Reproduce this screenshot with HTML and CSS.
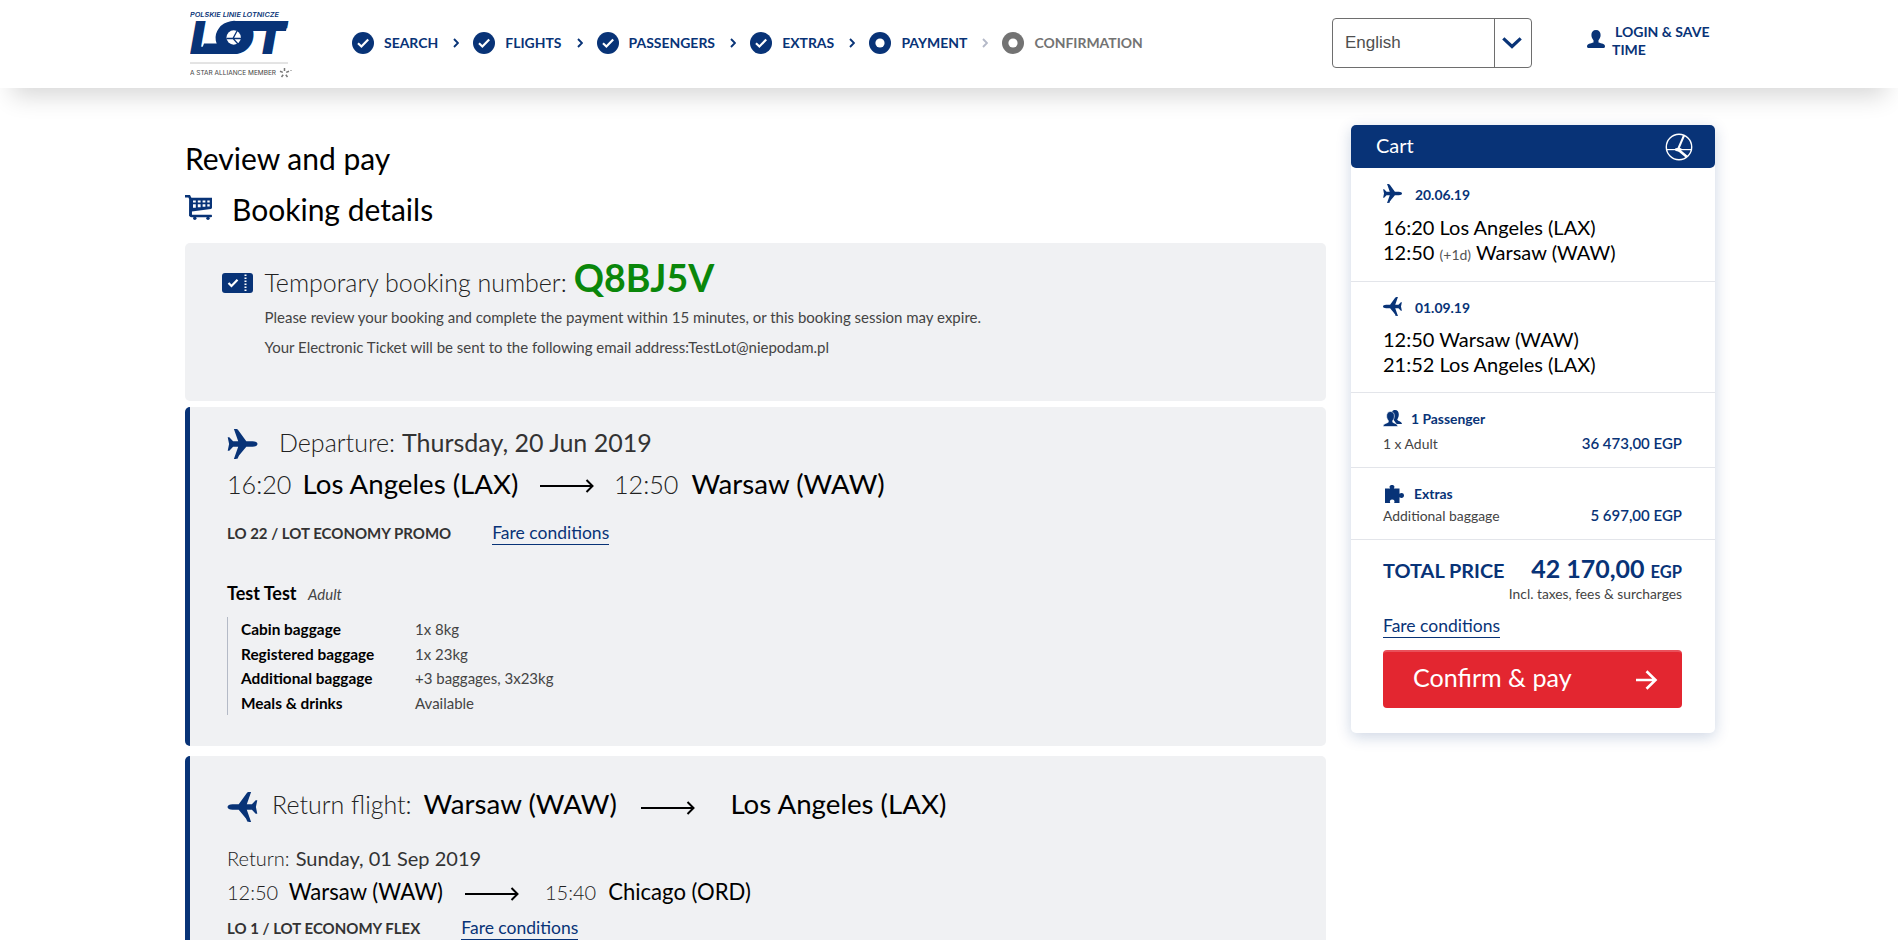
FILE: index.html
```html
<!DOCTYPE html>
<html lang="en">
<head>
<meta charset="utf-8">
<title>Review and pay</title>
<link rel="stylesheet" href="styles.css">
</head>
<body>
<svg class="defs" width="0" height="0">
  <symbol id="plane" viewBox="0 0 30 30">
    <path d="M8.600 0H6.400L10.700 12.200H5.600L1.800 8.200H.2L1.600 15L.2 21.800H1.800L5.600 17.800H10.700L6.400 30H8.600L18.800 17.800H25C28 17.800 30 16.400 30 15S28 12.200 25 12.200H18.800L10.800 1.200C10 .2 9.400 0 8.600 0Z"/>
    <path d="M10.400 29.200C10 29.800 9.400 30 8.600 30L12 24Z"/>
  </symbol>
  <symbol id="check" viewBox="0 0 22 22">
    <circle cx="11" cy="11" r="11"/>
    <path d="M6 11.300l3.400 3.200 6.800-7" fill="none" stroke="#fff" stroke-width="2.200"/>
  </symbol>
  <symbol id="dot" viewBox="0 0 22 22">
    <circle cx="11" cy="11" r="11"/>
    <circle cx="11" cy="11" r="4.600" fill="#fff"/>
  </symbol>
  <symbol id="chev" viewBox="0 0 6 10">
    <path d="M1 1l4 4-4 4" fill="none" stroke="currentColor" stroke-width="1.900"/>
  </symbol>
  <symbol id="arrow" viewBox="0 0 54 14">
    <path d="M0 7h52.500M46.500 1l6 6-6 6" fill="none" stroke="#000" stroke-width="2"/>
  </symbol>
</svg>

<header class="topbar">
  <svg class="logo" width="104" height="70" viewBox="0 0 104 70">
    <text class="logo-small" x="0" y="8.800" textLength="89" lengthAdjust="spacingAndGlyphs">POLSKIE LINIE LOTNICZE</text>
    <text class="logo-main" x="0" y="46" textLength="96" lengthAdjust="spacingAndGlyphs">LOT</text>
    <path d="M43 13H98L96 23H36zM14 35.500H42L46 46H10z" fill="#083377"/>
    <ellipse cx="43.500" cy="29.500" rx="18" ry="16.500" fill="#083377" transform="rotate(-10 43 29.500)"/>
    <circle cx="43.700" cy="29.500" r="7.200" fill="#fff"/>
    <path d="M36.500 30.500H51M47 23L43 30.500L48 36" fill="none" stroke="#083377" stroke-width="1.300"/>
    <path d="M0 55h98" stroke="#c8c8c8"/>
    <text class="logo-member" x="0" y="66.500" textLength="86" lengthAdjust="spacingAndGlyphs">A STAR ALLIANCE MEMBER</text>
    <path d="M94.500 60v3M99 63.200l-2.800 1.200M97.500 69l-1.700-2.300M91.500 69l1.700-2.300M90 63.200l2.800 1.200" stroke="#777" stroke-width="1.500" fill="none"/>
    <path d="M100 62.500h2" stroke="#bbb"/>
  </svg>
  <ol class="steps">
    <li><svg class="step-icon"><use href="#check"/></svg><span>SEARCH</span><svg class="chev"><use href="#chev"/></svg></li>
    <li><svg class="step-icon"><use href="#check"/></svg><span>FLIGHTS</span><svg class="chev"><use href="#chev"/></svg></li>
    <li><svg class="step-icon"><use href="#check"/></svg><span>PASSENGERS</span><svg class="chev"><use href="#chev"/></svg></li>
    <li><svg class="step-icon"><use href="#check"/></svg><span>EXTRAS</span><svg class="chev"><use href="#chev"/></svg></li>
    <li><svg class="step-icon"><use href="#dot"/></svg><span>PAYMENT</span><svg class="chev chev-off"><use href="#chev"/></svg></li>
    <li class="off"><svg class="step-icon"><use href="#dot"/></svg><span>CONFIRMATION</span></li>
  </ol>
  <div class="language">
    <span class="language-name">English</span>
    <span class="language-toggle"><svg width="20" height="12" viewBox="0 0 20 12"><path d="M1.300 1.300L10 9.500L18.700 1.300" fill="none" stroke="#083377" stroke-width="3.200"/></svg></span>
  </div>
  <a class="login">
    <svg width="18" height="18" viewBox="0 0 18 18"><path d="M9 0C12 0 13.600 2 13.600 5C13.600 7.500 12.500 9 11.500 10.200V12.600C14.500 13.600 18 13.800 18 16.400C18 17.600 17 18 16 18H2C1 18 0 17.600 0 16.400C0 13.800 3.500 13.600 6.500 12.600V10.200C5.500 9 4.400 7.500 4.400 5C4.400 2 6 0 9 0Z"/></svg>
    <span class="login-text">LOGIN &amp; SAVE TIME</span>
  </a>
</header>

<div class="page">
  <main class="main">
    <h1 class="title">Review and pay</h1>
    <h2 class="subtitle">
      <svg class="cart-icon" width="27" height="25" viewBox="0 0 27 25">
        <path d="M0 1.300H4.200L5.500 4V21" fill="none" stroke="#083377" stroke-width="2.600"/>
        <path d="M4.500 2.800H27V12.300C27 13.300 26.500 13.800 25.800 13.900L6.800 16.600V19.800H26C26.700 19.800 27 20.200 27 21S26.700 22.200 26 22.200H6.500C5 22.200 4.200 21.400 4.200 20Z"/>
        <path d="M8 5.400h2.800v2H8zM12.800 5.400h2.800v2h-2.800zM17.600 5.400h2.800v2h-2.800zM22.300 5.400h2.400v2h-2.400zM8 9.200h2.800v3.600H8zM12.800 9.200h2.800v3h-2.800zM17.600 9.200h2.800v2.600h-2.800zM22.300 9.200h2.400v2.200h-2.400z" fill="#fff"/>
        <circle cx="9.800" cy="23.200" r="1.700"/><circle cx="23" cy="23.200" r="1.700"/>
      </svg>
      <span>Booking details</span>
    </h2>

    <section class="card booking">
      <svg class="ticket" width="31" height="20" viewBox="0 0 31 20">
        <rect width="31" height="20" rx="3"/>
        <path d="M6.500 10l3 3 6-6.200" fill="none" stroke="#fff" stroke-width="2.200"/>
        <path d="M23.500 1.500v18" stroke="#fff" stroke-width="2" stroke-dasharray="1.500 1.500"/>
      </svg>
      <div>
        <p class="booking-number"><span>Temporary booking number:</span><strong>Q8BJ5V</strong></p>
        <p class="note">Please review your booking and complete the payment within 15 minutes, or this booking session may expire.</p>
        <p class="note">Your Electronic Ticket will be sent to the following email address:TestLot@niepodam.pl</p>
      </div>
    </section>

    <section class="card flight departure">
      <div class="flight-date"><svg class="plane"><use href="#plane"/></svg><span class="light">Departure:</span><span class="date">Thursday, 20 Jun 2019</span></div>
      <div class="route route-large"><span class="light">16:20</span><span class="city">Los Angeles (LAX)</span><svg class="arrow"><use href="#arrow"/></svg><span class="light">12:50</span><span class="city city-to">Warsaw (WAW)</span></div>
      <div class="fare"><strong>LO 22 / LOT ECONOMY PROMO</strong><a class="link">Fare conditions</a></div>
      <div class="traveller"><strong>Test Test</strong><em>Adult</em></div>
      <dl class="extras">
        <dt>Cabin baggage</dt><dd>1x 8kg</dd>
        <dt>Registered baggage</dt><dd>1x 23kg</dd>
        <dt>Additional baggage</dt><dd>+3 baggages, 3x23kg</dd>
        <dt>Meals &amp; drinks</dt><dd>Available</dd>
      </dl>
    </section>

    <section class="card flight return">
      <div class="return-head"><svg class="plane plane-back"><use href="#plane"/></svg><span class="light">Return flight:</span><span class="city from">Warsaw (WAW)</span><svg class="arrow"><use href="#arrow"/></svg><span class="city to">Los Angeles (LAX)</span></div>
      <div class="return-date"><span class="light">Return:</span><span class="date">Sunday, 01 Sep 2019</span></div>
      <div class="route route-small"><span class="light">12:50</span><span class="city">Warsaw (WAW)</span><svg class="arrow"><use href="#arrow"/></svg><span class="light">15:40</span><span class="city city-to">Chicago (ORD)</span></div>
      <div class="fare"><strong>LO 1 / LOT ECONOMY FLEX</strong><a class="link">Fare conditions</a></div>
    </section>
  </main>

  <aside class="cart">
    <div class="cart-head">
      <span>Cart</span>
      <svg width="28" height="28" viewBox="0 0 28 28"><g fill="none" stroke="#fff"><circle cx="14" cy="14" r="12.700" stroke-width="1.400"/><path d="M1.500 16.600H26.500" stroke-width="1.200"/><path d="M19 2.500L13.200 16" stroke-width="2"/><path d="M13 16.600L21.800 23.800" stroke-width="2.600"/></g><ellipse cx="13.300" cy="16.600" rx="3.500" ry="1.800" fill="#fff"/></svg>
    </div>
    <div class="cart-section leg">
      <div class="cart-label"><svg class="mini-plane"><use href="#plane"/></svg><span>20.06.19</span></div>
      <p>16:20 Los Angeles (LAX)</p>
      <p>12:50 <small>(+1d)</small> Warsaw (WAW)</p>
    </div>
    <div class="cart-section leg leg-back">
      <div class="cart-label"><svg class="mini-plane plane-back"><use href="#plane"/></svg><span>01.09.19</span></div>
      <p>12:50 Warsaw (WAW)</p>
      <p>21:52 Los Angeles (LAX)</p>
    </div>
    <div class="cart-section pax">
      <div class="cart-label pax-label">
        <svg width="19" height="17" viewBox="0 0 19 17"><path d="M9 1.500C10 .3 11 0 12 0C14.600 0 15.800 2 15.800 4.600C15.800 7 14.800 8.600 14.200 9.600C14.600 11.400 18.500 11.200 19 14H13.500L10 9Z"/><path d="M7.500 1.500C10 1.500 11.400 3.400 11.400 6C11.400 8.200 10.400 9.600 9.700 10.600V12.200C11.500 13.600 14.600 13.400 14.800 16.500H0C.2 13.400 3.500 13.600 5.300 12.200V10.600C4.600 9.600 3.600 8.200 3.600 6C3.600 3.400 5 1.500 7.500 1.500Z" stroke="#fff" stroke-width=".6"/></svg>
        <span>1 Passenger</span>
      </div>
      <div class="cart-row"><span>1 x Adult</span><strong>36 473,00 EGP</strong></div>
    </div>
    <div class="cart-section add">
      <div class="cart-label add-label">
        <svg width="20" height="18" viewBox="0 0 20 18"><path d="M1 3.500H6.200C4.800 1.800 5.800 0 8 0S11.200 1.800 9.800 3.500H15.500V8.800C17.500 7.400 20 8.200 20 10.500S17.500 13.600 15.500 12.200V18H10.200C11 15.800 10.200 14.500 8.200 14.500S5.400 15.800 6.200 18H1Z"/></svg>
        <span>Extras</span>
      </div>
      <div class="cart-row"><span>Additional baggage</span><strong>5 697,00 EGP</strong></div>
    </div>
    <div class="total">
      <div class="total-row"><span class="total-name">TOTAL PRICE</span><span class="total-sum">42 170,00</span><span class="total-currency">EGP</span></div>
      <p class="taxes">Incl. taxes, fees &amp; surcharges</p>
      <a class="link">Fare conditions</a>
      <button class="pay"><span>Confirm &amp; pay</span><svg width="22" height="20" viewBox="0 0 22 20"><path d="M0 10h19M10.500 1.200l9 8.800-9 8.800" fill="none" stroke="#fff" stroke-width="2.600"/></svg></button>
    </div>
  </aside>
</div>
</body>
</html>
```
FILE: styles.css
```css
* { box-sizing: border-box; margin: 0; padding: 0; }
body { height: 940px; overflow: hidden; background: #fff; color: #000; font-family: Lato, "Liberation Sans", sans-serif; font-size: 15px; }
svg { display: block; flex: none; fill: #083377; }
.defs { position: absolute; }

.topbar { display: flex; align-items: flex-start; height: 88px; padding-left: 190px; background: #fff; box-shadow: 0 20px 24px -12px rgba(0, 0, 0, .16); white-space: nowrap; }
.logo { margin-top: 8px; }
.logo-small { font: italic 600 6px Inter, sans-serif; }
.logo-main { font: italic 900 45.500px Inter, sans-serif; }
.logo-member { font: 400 5.500px Inter, sans-serif; fill: #444; }
.steps { display: flex; width: 980px; margin: 32px 0 0 58px; list-style: none; color: #083377; font-size: 13.950px; font-weight: 700; line-height: 22px; }
.steps li { display: flex; align-items: center; }
.step-icon { width: 22px; height: 22px; margin-right: 10px; }
.chev { width: 6px; height: 10px; margin: 0 14px 0 15.200px; color: #083377; }
.chev-off { color: #b4b9c8; }
.steps .off { color: #737373; }
.off .step-icon { fill: #737373; }
.language { display: flex; width: 200px; height: 50px; margin-top: 18px; border: 1px solid #6e6e6e; border-radius: 4px; color: #4f4f4f; font: 17px/47px "Liberation Sans", sans-serif; }
.language-name { width: 162px; padding-left: 12px; border-right: 1px solid #6e6e6e; }
.language-toggle { padding: 18px 0 0 7px; }
.login { display: flex; align-items: flex-start; width: 130px; margin: 23px 0 0 55px; color: #083377; font-size: 14px; font-weight: 700; line-height: 18px; }
.login svg { margin: 7px 7px 0 0; }
.login-text { width: 100px; text-indent: 3px; white-space: normal; }

.page { display: flex; align-items: flex-start; gap: 25px; margin-left: 185px; white-space: nowrap; }
.main { width: 1141px; }
.title, .subtitle { font-size: 30px; font-weight: 400; line-height: 36px; }
.title { margin: 52px 0 15px; }
.subtitle { display: flex; gap: 20px; margin-bottom: 16px; }
.cart-icon { margin-top: 4px; }
.card { background: #f0f1f3; border-radius: 5px; }
.booking { display: flex; gap: 11.500px; height: 158px; padding: 12px 37px; }
.ticket { margin-top: 18px; }
.booking-number { display: flex; align-items: baseline; gap: 7px; height: 46px; margin-bottom: 1px; font-size: 25px; line-height: 46px; font-weight: 300; color: #222; }
.booking-number strong { color: #0a870a; font-size: 37.500px; font-weight: 700; }
.note { color: #444; line-height: 30px; }

.flight { border-left: 5px solid #083377; padding-left: 37px; }
.departure { height: 339px; margin-top: 6px; padding-top: 20px; }
.return { height: 184px; margin-top: 10px; padding-top: 31px; border-radius: 5px 5px 0 0; }
.plane { width: 31px; height: 30px; }
.plane-back { transform: scaleX(-1); }
.light { font-weight: 300; color: #222; }
.date { color: #333; }
.arrow { width: 54px; height: 14px; }
.flight-date { display: flex; font-size: 25px; line-height: 30px; }
.flight-date .plane { margin: 2px 21px 0 0; }
.flight-date .date { margin-left: 7px; }
.route { display: flex; align-items: baseline; }
.route-large { height: 34px; margin-top: 8px; font-size: 27.700px; line-height: 34px; }
.route-large .light { font-size: 25.200px; }
.route-large .city { margin-left: 11px; }
.route-large .city-to { margin-left: 13px; }
.route .arrow { align-self: center; margin: 4px 20px 0 21.500px; }
.fare { display: flex; align-items: baseline; gap: 41px; height: 24px; margin-top: 20px; line-height: 24px; }
.fare strong { color: #333; }
.link { color: #083377; border-bottom: 1px solid #083377; font-size: 17.500px; line-height: 22px; }
.traveller { display: flex; align-items: baseline; gap: 11.500px; height: 22px; margin-top: 37px; line-height: 22px; }
.traveller strong { font-size: 18px; }
.traveller em { color: #444; }
.extras { display: grid; grid-template-columns: 174px auto; width: 600px; margin-top: 13px; padding-left: 13px; border-left: 1px solid #b4bac6; line-height: 24.500px; }
.extras dt { font-size: 15.400px; font-weight: 700; }
.extras dd { color: #444; }

.return-head { display: flex; align-items: baseline; height: 34px; font-size: 25px; line-height: 34px; }
.return-head .plane { align-self: flex-start; margin: 5px 14px 0 0; }
.return-head .city { font-size: 27.700px; }
.return-head .from { margin-left: 12px; }
.return-head .arrow { align-self: center; margin: 8px 35px 0 24.500px; }
.return-date { display: flex; gap: 6px; margin-top: 25px; font-size: 20px; line-height: 24px; }
.route-small { height: 28px; margin-top: 8px; font-size: 22.100px; line-height: 28px; }
.route-small .light { font-size: 20px; }
.route-small .city { margin-left: 10.500px; }
.route-small .city-to { margin-left: 12px; }
.route-small .arrow { margin: 4px 26px 0 22px; }
.return .fare { margin-top: 10px; }

.cart { width: 364px; height: 608px; margin-top: 37px; border-radius: 5px; background: #fff; box-shadow: 0 4px 15px rgba(8, 51, 119, .2); }
.cart-head { display: flex; justify-content: space-between; height: 43px; padding: 8px 22px 0 25px; border-radius: 5px; background: #083377; color: #fff; font-size: 20px; line-height: 24px; }
.cart-section { padding: 16px 32px; border-bottom: 1px solid #e3e5ea; }
.cart-label { display: flex; align-items: flex-start; height: 20px; color: #083377; font-size: 13.900px; font-weight: 700; line-height: 22px; }
.mini-plane { width: 19px; height: 19px; margin-right: 13px; }
.leg p { height: 25px; font-size: 20px; line-height: 25px; }
.leg .cart-label { margin-bottom: 11px; }
.leg small { color: #555; font-size: 14px; }
.leg-back { padding: 15px 32px 15px; }
.leg-back .cart-label { margin-bottom: 10px; }
.pax { padding: 15px 33px 14px 32px; }
.pax-label svg { margin: 2px 9px 0 0; }
.pax-label { margin-bottom: 5px; }
.add { padding: 15px 33px 14px 32px; }
.add-label svg { margin: 2px 10px 0 1px; }
.add-label { margin-bottom: 2px; }
.cart-row { display: flex; justify-content: space-between; align-items: baseline; height: 20px; color: #444; font-size: 13.900px; line-height: 20px; }
.cart-row strong { color: #083377; font-size: 15px; font-weight: 600; }
.total { padding: 14px 33px 0 32px; color: #083377; font-weight: 700; }
.total-row { display: flex; align-items: baseline; height: 30px; line-height: 29px; }
.total-name { margin-right: auto; font-size: 19.900px; }
.total-sum { margin-right: 6px; font-size: 25px; }
.total-currency { font-size: 16.500px; }
.taxes { color: #444; font-size: 13.800px; font-weight: 400; line-height: 20px; text-align: right; }
.total .link { display: block; width: fit-content; margin-top: 11px; font-weight: 400; }
.pay { display: flex; justify-content: space-between; align-items: center; width: 299px; height: 58px; margin-top: 12px; padding: 0 24px 6px 30px; border: 0; border-top: 2px solid #e9505a; border-radius: 4px; background: #e32630; color: #fff; font: 400 25.100px/30px Lato, sans-serif; }
.pay svg { margin-top: 5px; }
```
